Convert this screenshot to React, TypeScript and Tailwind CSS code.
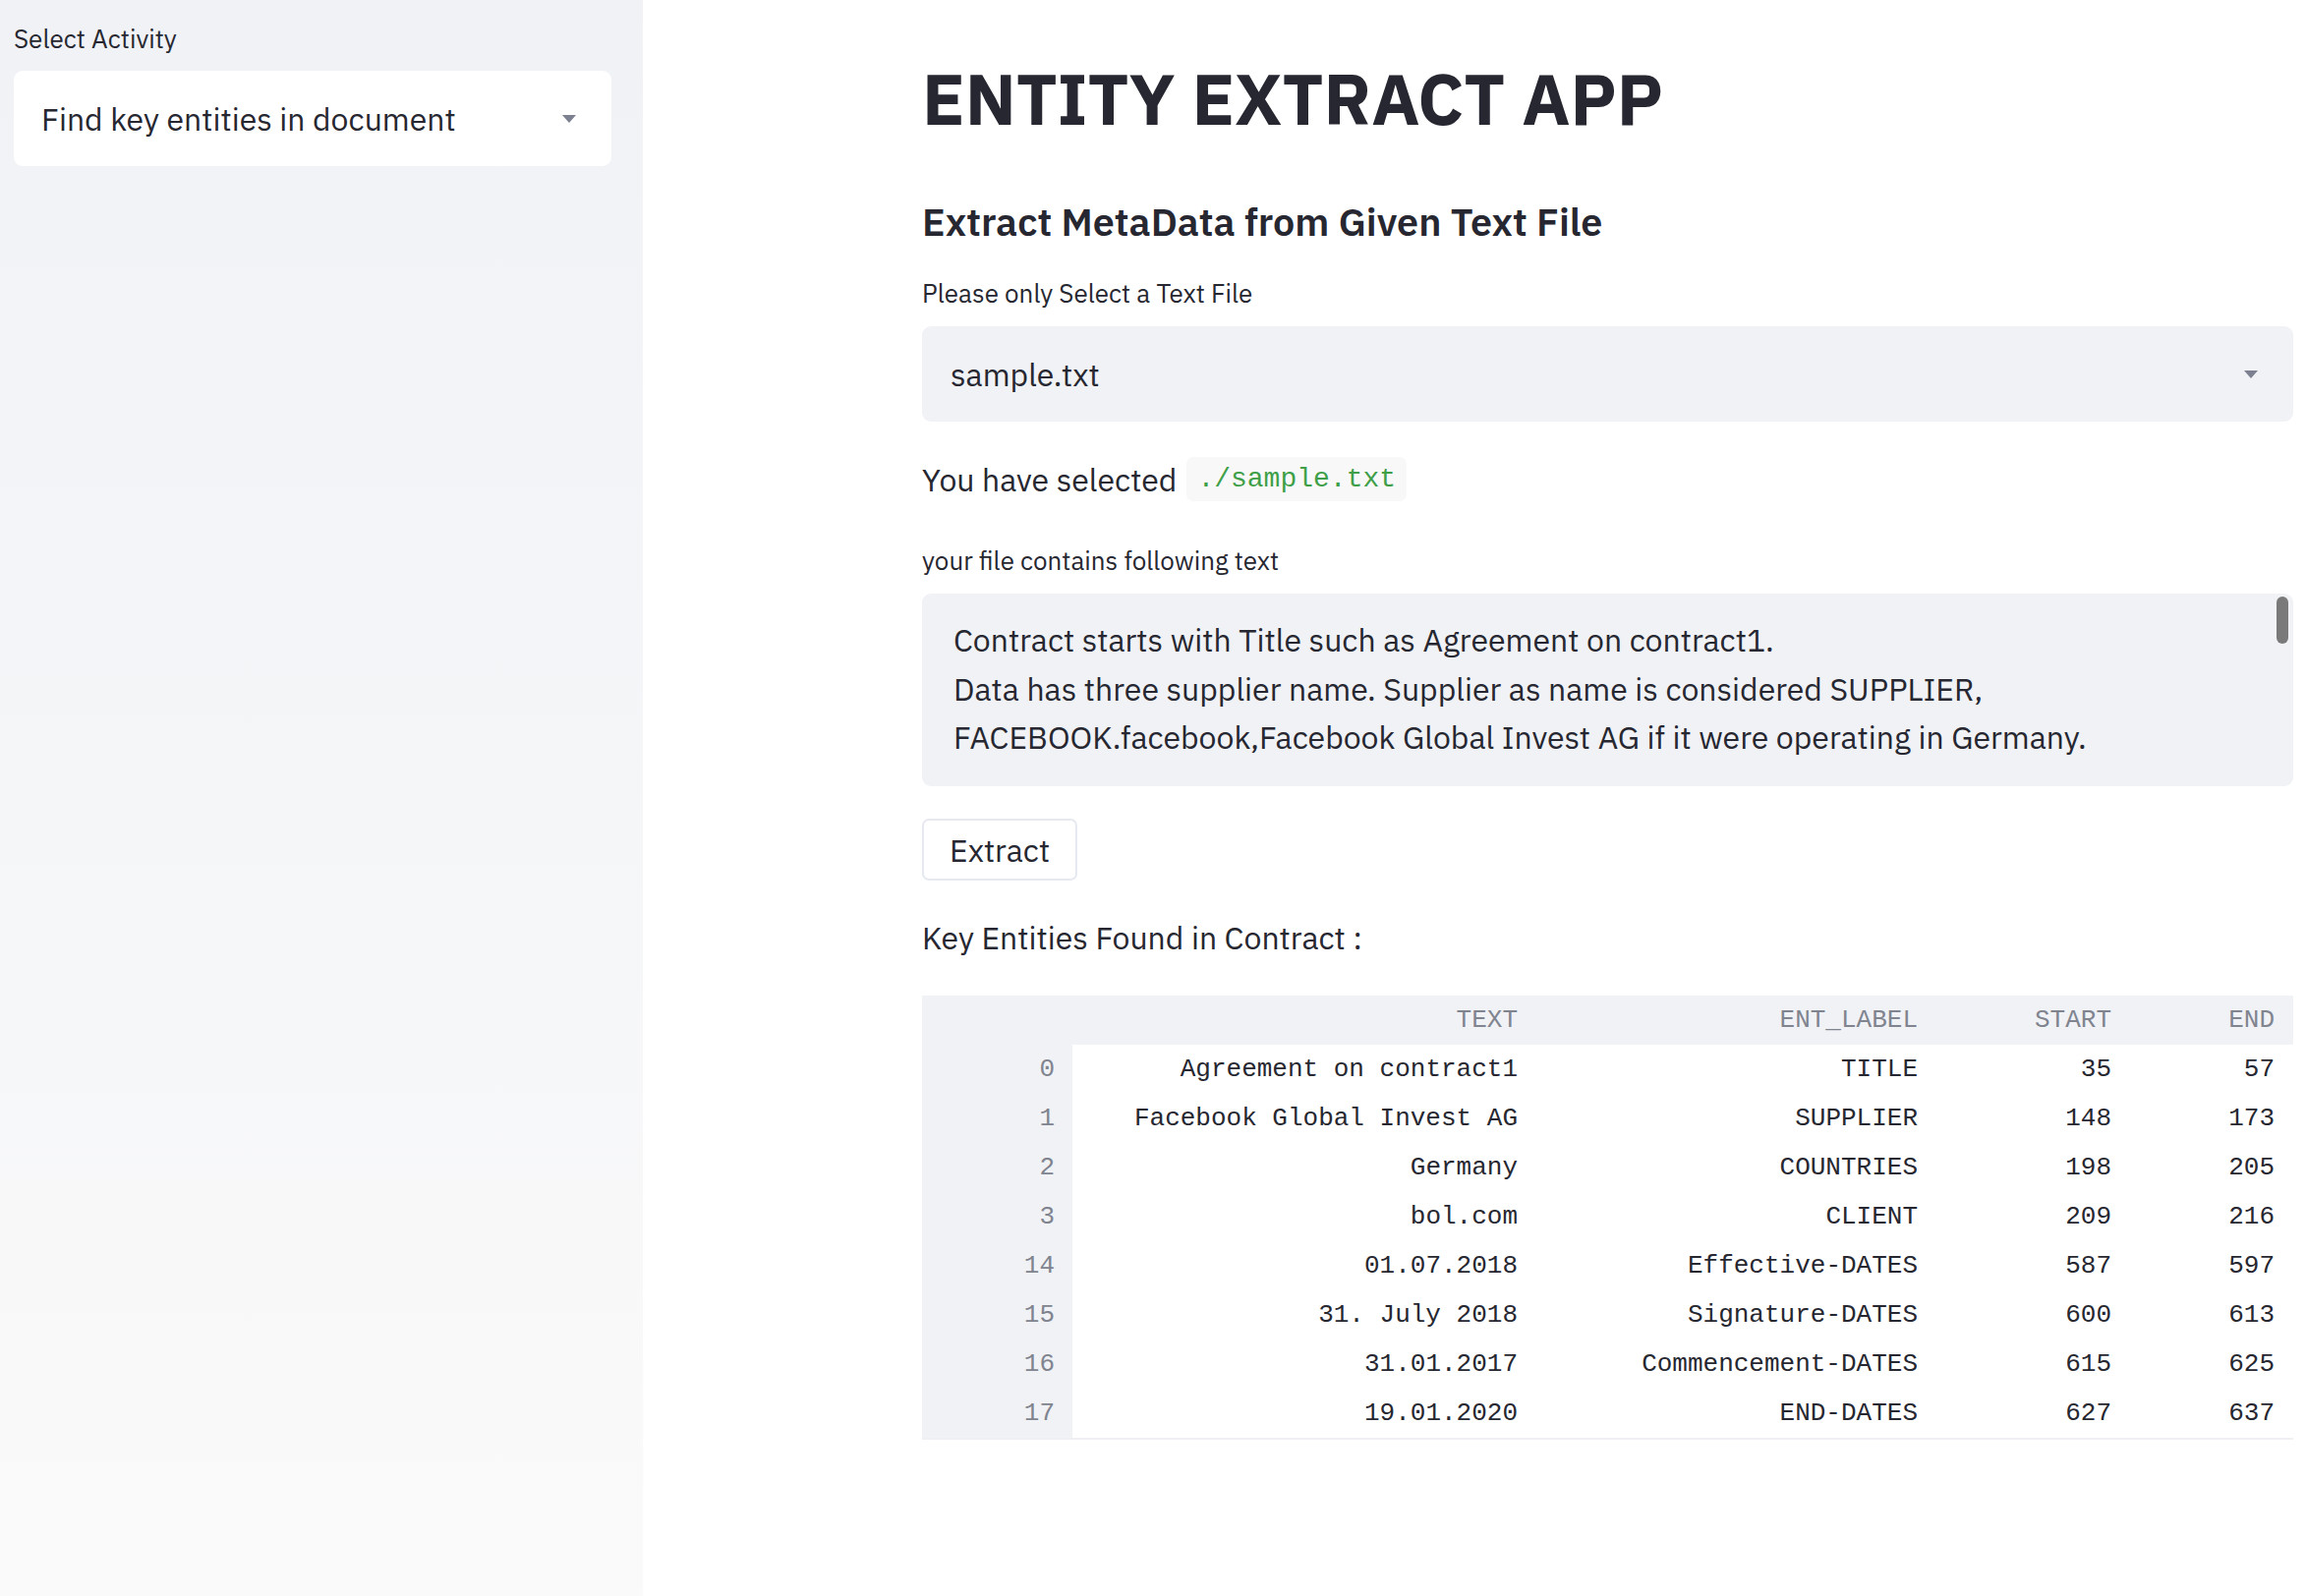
import { useState } from 'react'

const sans = "font-['IBM_Plex_Sans','Inter',sans-serif]"
const mono = "font-['Liberation_Mono','DejaVu_Sans_Mono',monospace]"

const rows = [
  { i: 0, text: 'Agreement on contract1', label: 'TITLE', start: 35, end: 57 },
  { i: 1, text: 'Facebook Global Invest AG', label: 'SUPPLIER', start: 148, end: 173 },
  { i: 2, text: 'Germany', label: 'COUNTRIES', start: 198, end: 205 },
  { i: 3, text: 'bol.com', label: 'CLIENT', start: 209, end: 216 },
  { i: 14, text: '01.07.2018', label: 'Effective-DATES', start: 587, end: 597 },
  { i: 15, text: '31. July 2018', label: 'Signature-DATES', start: 600, end: 613 },
  { i: 16, text: '31.01.2017', label: 'Commencement-DATES', start: 615, end: 625 },
  { i: 17, text: '19.01.2020', label: 'END-DATES', start: 627, end: 637 },
]

function Caret() {
  return (
    <svg width="14" height="8" viewBox="0 0 14 8" className="shrink-0">
      <path d="M0 0 H14 L7 8 Z" fill="#7d8091" />
    </svg>
  )
}

function Sidebar() {
  return (
    <aside className="w-[654px] shrink-0 min-h-screen bg-gradient-to-b from-[#f0f2f6] to-[#fafafa] pl-[14px] pr-[32px] pt-[21px]">
      <div className="text-[26px] leading-[36px] text-[#262730]">Select Activity</div>
      <div className="mt-[15px] h-[97px] rounded-[9px] bg-white flex items-center justify-between pl-[28px] pr-[36px]">
        <span className="text-[32px] text-[#262730]">Find key entities in document</span>
        <Caret />
      </div>
    </aside>
  )
}

function EntityTable() {
  const grid = 'grid grid-cols-[153px_472px_407px_197px_166px]'
  return (
    <div className={`${mono} text-[26px] border-b-2 border-[#eef0f4]`}>
      <div className={`${grid} h-[50px] items-center bg-[#f0f2f6] text-[#80848f]`}>
        <div />
        <div className="text-right pr-[19px]">TEXT</div>
        <div className="text-right pr-[19px]">ENT_LABEL</div>
        <div className="text-right pr-[19px]">START</div>
        <div className="text-right pr-[19px]">END</div>
      </div>
      {rows.map((r) => (
        <div key={r.i} className={`${grid} h-[50px] items-center`}>
          <div className="h-full flex items-center justify-end pr-[18px] bg-[#f0f2f6] text-[#80848f]">{r.i}</div>
          <div className="text-right pr-[19px] text-[#262730] whitespace-pre">{r.text}</div>
          <div className="text-right pr-[19px] text-[#262730]">{r.label}</div>
          <div className="text-right pr-[19px] text-[#262730]">{r.start}</div>
          <div className="text-right pr-[19px] text-[#262730]">{r.end}</div>
        </div>
      ))}
    </div>
  )
}

export default function App() {
  const [file] = useState('sample.txt')

  return (
    <div className={`${sans} flex w-full min-h-screen bg-white text-[#262730]`}>
      <Sidebar />
      <main className="flex-1 pl-[284px] pr-[13px] pt-[54px]">
        <h1 className="text-[72px] leading-[92px] font-bold">ENTITY EXTRACT APP</h1>
        <h3 className="mt-[52px] text-[39.5px] leading-[56px] font-semibold">Extract MetaData from Given Text File</h3>
        <div className="mt-[26px] text-[26px] leading-[36px]">Please only Select a Text File</div>
        <div className="mt-[16px] h-[97px] rounded-[9px] bg-[#f0f2f6] flex items-center justify-between pl-[29px] pr-[36px]">
          <span className="text-[32px]">{file}</span>
          <Caret />
        </div>
        <div className="mt-[36px] h-[45px] flex items-center gap-[10px]">
          <span className="text-[32px]">You have selected</span>
          <code className={`${mono} h-[45px] flex items-center px-[11px] rounded-[7px] bg-[#f8f8f9] text-[#3f9f48] text-[28px]`}>
            ./{file}
          </code>
        </div>
        <div className="mt-[42px] text-[26px] leading-[36px]">your file contains following text</div>
        <div className="mt-[16px] relative h-[196px] rounded-[9px] bg-[#f0f2f6] px-[32px] py-[23px] text-[32px] leading-[49.5px]">
          <p>Contract starts with Title such as Agreement on contract1.</p>
          <p>Data has three supplier name. Supplier as name is considered SUPPLIER,</p>
          <p>FACEBOOK.facebook,Facebook Global Invest AG if it were operating in Germany.</p>
          <div className="absolute right-[5px] top-[3px] w-[12px] h-[48px] rounded-full bg-[#7a7a7a]" />
        </div>
        <button className="mt-[33px] h-[63px] px-[26px] rounded-[7px] border-2 border-[#e6e9ef] bg-white text-[32px]">
          Extract
        </button>
        <div className="mt-[36px] text-[32px] leading-[44px]">Key Entities Found in Contract :</div>
        <div className="mt-[37px]">
          <EntityTable />
        </div>
      </main>
    </div>
  )
}
